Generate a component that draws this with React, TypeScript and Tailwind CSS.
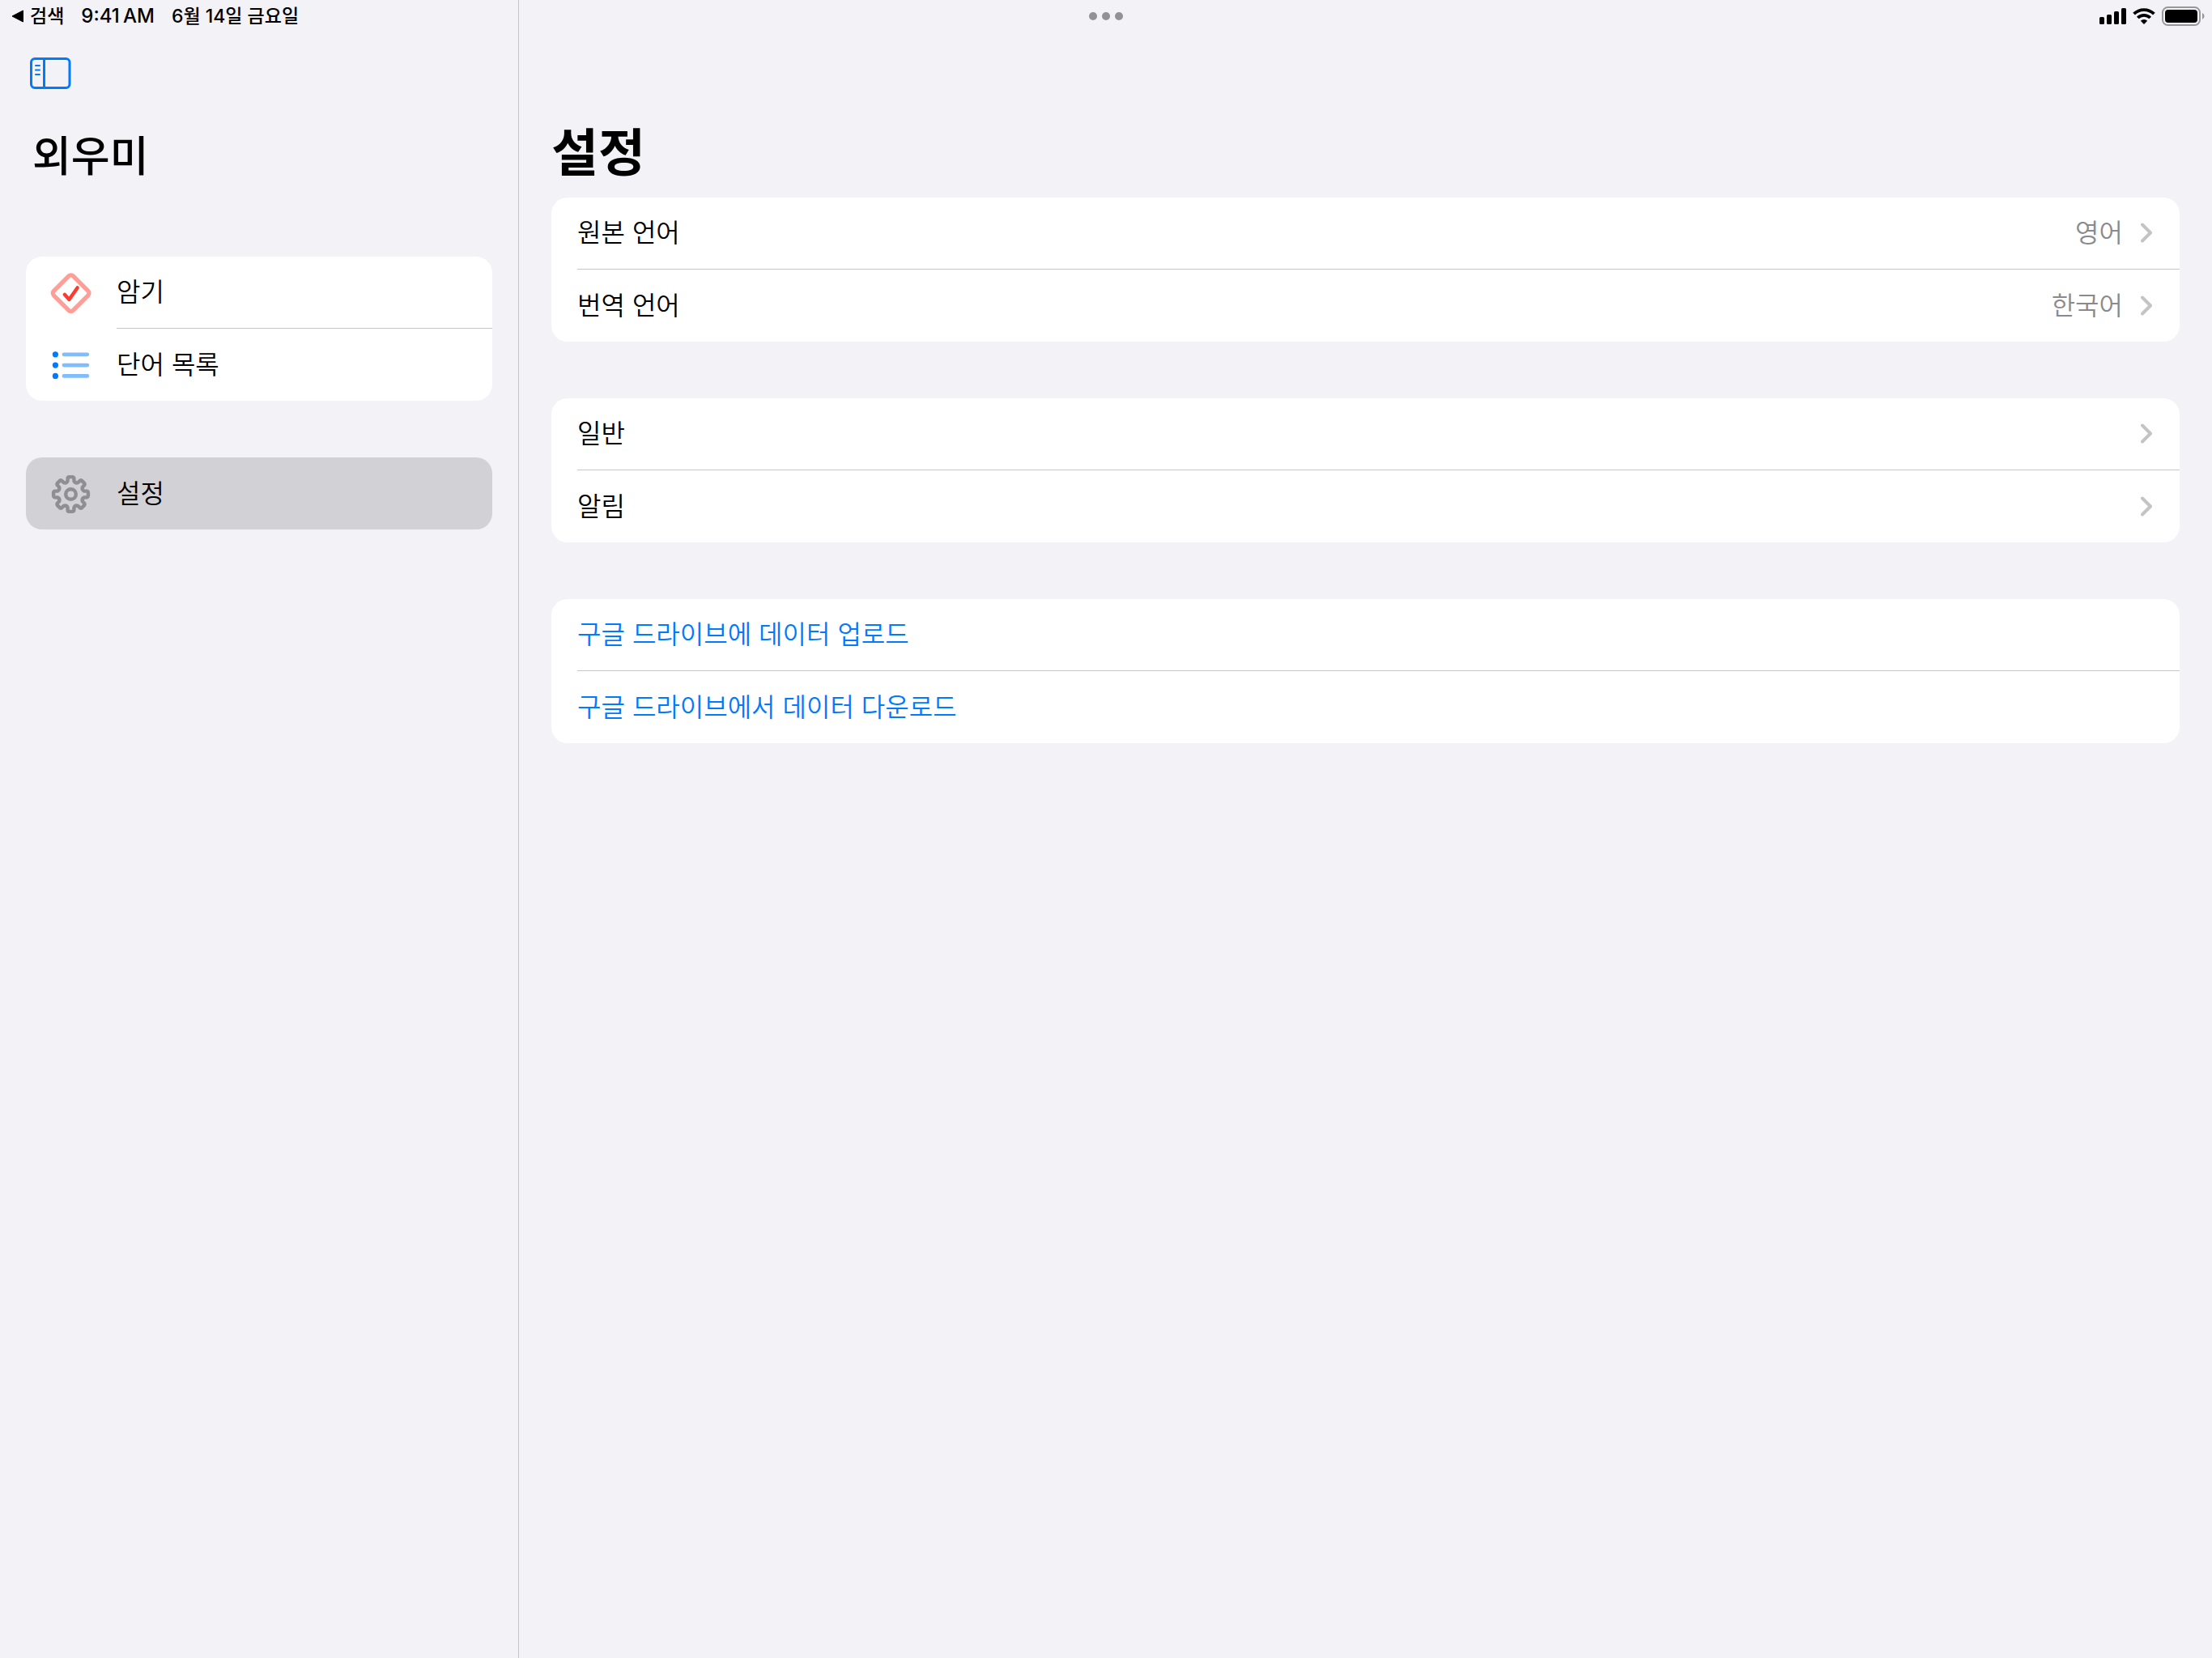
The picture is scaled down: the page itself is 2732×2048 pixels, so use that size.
import type { ReactNode } from "react";

const polar = (r: number, a: number) =>
  `${(27.5 + r * Math.sin(a)).toFixed(2)} ${(28.5 - r * Math.cos(a)).toFixed(2)}`;

const gearPath = () => {
  const step = Math.PI / 4;
  let d = "";
  for (let i = 0; i < 8; i++) {
    const c = i * step;
    d += `${i === 0 ? "M" : "L"}${polar(16.8, c - 0.24)} L${polar(20.4, c - 0.19)} Q${polar(21.5, c - 0.17)} ${polar(21.5, c - 0.1)} L${polar(21.5, c + 0.1)} Q${polar(21.5, c + 0.17)} ${polar(20.4, c + 0.19)} L${polar(16.8, c + 0.24)} Q${polar(14.4, c + step / 2)} ${polar(16.8, c + step - 0.24)} `;
  }
  return d + "Z";
};

const GearIcon = () => (
  <svg viewBox="0 0 56 56" className="size-14" fill="none" stroke="#8e8e93" strokeWidth="4.4" strokeLinejoin="round" aria-hidden="true">
    <path d={gearPath()} />
    <circle cx="27.5" cy="28.5" r="6.3" />
  </svg>
);

const DiamondCheckIcon = () => (
  <svg viewBox="0 0 56 56" className="size-14" fill="none" strokeLinecap="round" strokeLinejoin="round" aria-hidden="true">
    <rect x="10.7" y="11.2" width="33.8" height="33.8" rx="3.8" transform="rotate(45 27.6 28.1)" stroke="#ff9d97" strokeWidth="5.2" />
    <path d="M19.8 29.8 25.4 36 35.6 21.4" stroke="#ff3b30" strokeWidth="4.4" />
  </svg>
);

const ListIcon = () => (
  <svg viewBox="0 0 56 56" className="size-14" aria-hidden="true">
    {[14.8, 28.1, 41.4].map((y) => (
      <g key={y}>
        <circle cx="8.4" cy={y} r="3.6" fill="#007aff" />
        <path d={`M19 ${y}H47.8`} stroke="#80bdff" strokeWidth="4.8" strokeLinecap="round" />
      </g>
    ))}
  </svg>
);

const SidebarIcon = () => (
  <svg viewBox="0 0 52 40" className="h-10 w-13" fill="none" stroke="#007aff" aria-hidden="true">
    <rect x="1.5" y="1.5" width="47.5" height="36" rx="4.5" strokeWidth="3" />
    <path d="M17.5 2V37" strokeWidth="3" />
    <path d="M7 10H12M7 15.5H12M7 21H12" strokeWidth="2" strokeLinecap="round" />
  </svg>
);

const Chevron = () => (
  <svg viewBox="0 0 16 26" className="h-[26px] w-4" fill="none" stroke="#c4c4c7" strokeWidth="4" strokeLinecap="round" strokeLinejoin="round" aria-hidden="true">
    <path d="M2 2.5 12 12.5 2 22.5" />
  </svg>
);

const SignalIcon = () => (
  <svg viewBox="0 0 33 22" className="h-[22px] w-[33px]" aria-hidden="true">
    <rect x="0" y="12" width="6" height="9" rx="1.6" />
    <rect x="9" y="9" width="6" height="12" rx="1.6" />
    <rect x="18" y="5" width="6" height="16" rx="1.6" />
    <rect x="27" y="1" width="6" height="20" rx="1.6" />
  </svg>
);

const WifiIcon = () => (
  <svg viewBox="0 0 28 22" className="h-[22px] w-7" fill="none" stroke="#000" strokeWidth="3.8" aria-hidden="true">
    <path d="M1.6 8.2A17.6 17.6 0 0 1 26.4 8.2" />
    <path d="M6.3 13A11 11 0 0 1 21.7 13" />
    <path d="M14 21 9.8 16.8A6 6 0 0 1 18.2 16.8Z" fill="#000" stroke="none" />
  </svg>
);

const BatteryIcon = () => (
  <svg viewBox="0 0 54 24" className="h-6 w-[54px]" aria-hidden="true">
    <rect x="1" y="1" width="46" height="22" rx="6.5" fill="none" stroke="#98979b" strokeWidth="2" />
    <rect x="4" y="4" width="40" height="16" rx="4" />
    <path d="M50 8A4.4 4.4 0 0 1 50 16Z" fill="#98979b" />
  </svg>
);

const Card = ({ children }: { children: ReactNode }) => (
  <ul className="overflow-hidden rounded-[20px] bg-white">{children}</ul>
);

const NavRow = ({ icon, label, divided }: { icon: ReactNode; label: string; divided?: boolean }) => (
  <li>
    <button type="button" className="flex h-[89px] w-full items-stretch pl-7 text-left">
      <span className="flex w-21 shrink-0 items-center">{icon}</span>
      <span className={divided ? "flex flex-1 items-center border-b border-[#c6c6c8]" : "flex flex-1 items-center"}>{label}</span>
    </button>
  </li>
);

const SettingRow = ({ label, value, divided }: { label: string; value?: string; divided?: boolean }) => (
  <li className="pl-8">
    <button type="button" className={divided ? "flex h-[89px] w-full items-center border-b border-[#c6c6c8] pr-8 text-left" : "flex h-[89px] w-full items-center pr-8 text-left"}>
      <span className="flex-1">{label}</span>
      <span className="mr-[22px] text-[#8a8a8e]">{value}</span>
      <Chevron />
    </button>
  </li>
);

const ActionRow = ({ label, divided }: { label: string; divided?: boolean }) => (
  <li className="pl-8">
    <button type="button" className={divided ? "flex h-[89px] w-full items-center border-b border-[#c6c6c8] text-left text-[#007aff]" : "flex h-[89px] w-full items-center text-left text-[#007aff]"}>
      {label}
    </button>
  </li>
);

export default function App() {
  return (
    <div className="grid min-h-screen grid-cols-[641px_1fr] grid-rows-[40px_1fr] bg-[#f2f2f7] font-['Inter','Noto_Sans_CJK_KR',sans-serif] text-[32px] leading-10 font-[350] text-black">
      <header className="col-span-2 col-start-1 row-start-1 grid grid-cols-3 items-center px-2 text-[23px] font-medium">
        <div className="flex items-center gap-[21px] pl-1.5">
          <button type="button" className="flex items-center gap-[7px]">
            <svg viewBox="0 0 16 16" className="size-4" aria-hidden="true">
              <path d="M1 8 14.5 1V15Z" stroke="#000" strokeLinejoin="round" />
            </svg>
            검색
          </button>
          <span className="text-[24px]">9:41{"\u2009"}AM</span>
          <span>6월 14일 금요일</span>
        </div>
        <div className="flex justify-center gap-1.5">
          <span className="size-2.5 rounded-full bg-[#929196]" />
          <span className="size-2.5 rounded-full bg-[#929196]" />
          <span className="size-2.5 rounded-full bg-[#929196]" />
        </div>
        <div className="flex items-center justify-end gap-2">
          <SignalIcon />
          <WifiIcon />
          <BatteryIcon />
        </div>
      </header>

      <aside className="col-start-1 row-span-2 row-start-1 border-r border-[#c6c6c8] px-8 pt-[71px]">
        <button type="button" aria-label="사이드바" className="ml-[5px] block">
          <SidebarIcon />
        </button>
        <h1 className="mt-[51px] ml-2 text-[52px] leading-16 font-medium">외우미</h1>
        <nav className="mt-[91px] flex flex-col gap-[70px]">
          <Card>
            <NavRow icon={<DiamondCheckIcon />} label="암기" divided />
            <NavRow icon={<ListIcon />} label="단어 목록" />
          </Card>
          <ul className="rounded-[20px] bg-[#d1d1d6]">
            <NavRow icon={<GearIcon />} label="설정" />
          </ul>
        </nav>
      </aside>

      <main className="col-start-2 row-span-2 row-start-1 px-10 pt-[148px]">
        <h2 className="text-[63px] leading-20 font-bold">설정</h2>
        <div className="mt-4 flex flex-col gap-[70px]">
          <Card>
            <SettingRow label="원본 언어" value="영어" divided />
            <SettingRow label="번역 언어" value="한국어" />
          </Card>
          <Card>
            <SettingRow label="일반" divided />
            <SettingRow label="알림" />
          </Card>
          <Card>
            <ActionRow label="구글 드라이브에 데이터 업로드" divided />
            <ActionRow label="구글 드라이브에서 데이터 다운로드" />
          </Card>
        </div>
      </main>
    </div>
  );
}
